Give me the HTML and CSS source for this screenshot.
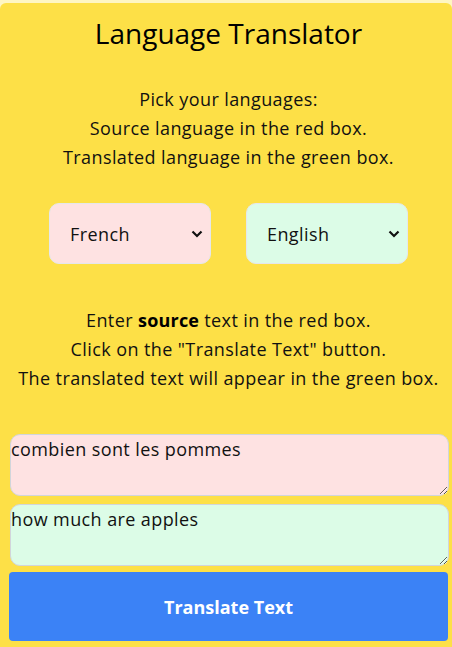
FILE: index.html
```html
<!DOCTYPE html>
<html lang="en">
<head>
<meta charset="utf-8">
<title>Language Translator</title>
<link rel="stylesheet" href="styles.css">
</head>
<body>
<main class="card">
  <h1 class="title">Language Translator</h1>
  <p class="info">Pick your languages:<br>Source language in the red box.<br>Translated language in the green box.</p>
  <div class="pickers">
    <div class="select-wrap">
      <select class="select red"><option>French</option></select>
      <svg class="chev" width="12" height="8" viewBox="0 0 12 8"><path d="M1.5 1.5 L6 6 L10.5 1.5" fill="none" stroke="#111" stroke-width="2.2"/></svg>
    </div>
    <div class="select-wrap">
      <select class="select green"><option>English</option></select>
      <svg class="chev" width="12" height="8" viewBox="0 0 12 8"><path d="M1.5 1.5 L6 6 L10.5 1.5" fill="none" stroke="#111" stroke-width="2.2"/></svg>
    </div>
  </div>
  <p class="info info2">Enter <b>source</b> text in the red box.<br>Click on the "Translate Text" button.<br>The translated text will appear in the green box.</p>
  <textarea class="box red">combien sont les pommes</textarea>
  <textarea class="box green">how much are apples</textarea>
  <button class="btn">Translate Text</button>
</main>
</body>
</html>
```
FILE: styles.css
```css
html, body { margin: 0; padding: 0; }
body {
  background: #fef6c3;
  padding-top: 3px;
  font-family: "Open Sans", "Noto Sans", sans-serif;
  color: #111;
}
.card {
  background: #fde047;
  border-radius: 6px 6px 0 0;
  padding: 12px 4px 10px 9px;
  display: flex;
  flex-direction: column;
  min-height: 700px;
}
.title {
  margin: 0;
  font-weight: 400;
  font-size: 28px;
  line-height: 36px;
  text-align: center;
  color: #000;
}
.info {
  margin: 34px 0 0;
  font-size: 18px;
  letter-spacing: 0.4px;
  line-height: 29px;
  text-align: center;
}
.info b { font-weight: 700; color: #000; letter-spacing: 0.2px; }
.pickers {
  display: flex;
  justify-content: center;
  gap: 35px;
  margin-top: 31px;
}
.select-wrap { position: relative; }
.select {
  appearance: none;
  -webkit-appearance: none;
  width: 162px;
  height: 61px;
  border: 1px solid #e5e7eb;
  border-radius: 10px;
  padding: 0 0 0 20px;
  font-family: inherit;
  font-size: 18px;
  letter-spacing: 0.4px;
  color: #111;
  display: block;
}
.chev { position: absolute; right: 8px; top: 27px; pointer-events: none; }
.red { background: #fee2e2; }
.green { background: #dcfce7; }
.info2 { margin-top: 42px; }
.box {
  display: block;
  box-sizing: border-box;
  width: 439px;
  height: 62px;
  margin: 41px 0 0 1px;
  border: 1px solid #d1d5db;
  border-radius: 10px;
  padding: 2px 0 0 0;
  font-family: inherit;
  font-size: 18px;
  letter-spacing: 0.4px;
  line-height: 24px;
  color: #111;
}
.box + .box { margin-top: 8px; }
.btn {
  margin-top: 6px;
  width: 439px;
  height: 69px;
  background: #3b82f6;
  color: #fff;
  border: none;
  border-radius: 4px;
  font-family: inherit;
  font-weight: 700;
  font-size: 18px;
}
```
